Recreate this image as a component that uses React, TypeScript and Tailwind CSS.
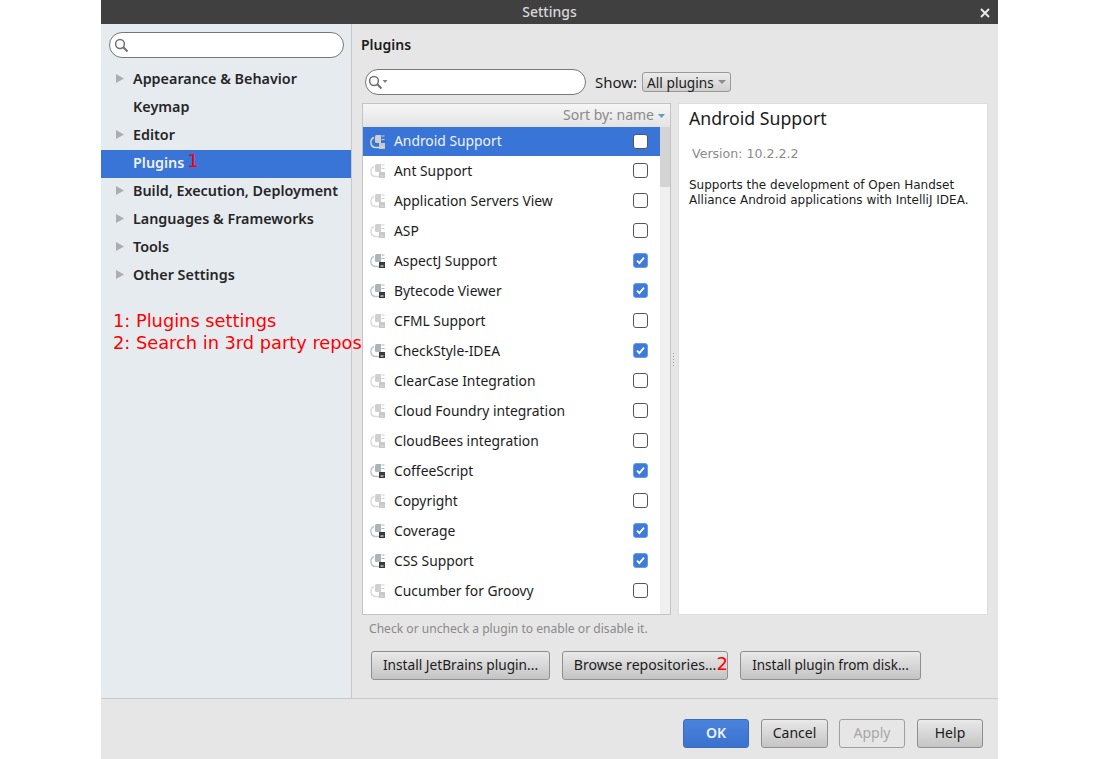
import React from "react";

const plugins: [string, boolean][] = [
  ["Android Support", false],
  ["Ant Support", false],
  ["Application Servers View", false],
  ["ASP", false],
  ["AspectJ Support", true],
  ["Bytecode Viewer", true],
  ["CFML Support", false],
  ["CheckStyle-IDEA", true],
  ["ClearCase Integration", false],
  ["Cloud Foundry integration", false],
  ["CloudBees integration", false],
  ["CoffeeScript", true],
  ["Copyright", false],
  ["Coverage", true],
  ["CSS Support", true],
  ["Cucumber for Groovy", false],
];

const nav: [string, boolean][] = [
  ["Appearance & Behavior", true],
  ["Keymap", false],
  ["Editor", true],
  ["Plugins", false],
  ["Build, Execution, Deployment", true],
  ["Languages & Frameworks", true],
  ["Tools", true],
  ["Other Settings", true],
];

function PluginIcon({ on }: { on: boolean }) {
  const body = on ? "#a9b4bb" : "#d0d0d0";
  const arc = on ? "#bcc6cc" : "#dcdcdc";
  return (
    <svg width="16" height="16" viewBox="0 0 16 16" className="shrink-0">
      <path d="M4 3.500C1.800 4.300 0.900 6 0.900 8.400c0 3 2 5.100 5 5.100H9" fill="none" stroke={arc} strokeWidth="1.400" />
      <path d="M5 2.500Q5 1 6.500 1h4.500v8H6.500Q5 9 5 7.500z" fill={body} />
      <path d="M11.500 2h3M11.500 5.500h3" stroke={body} strokeWidth="1.100" />
      <rect x="9" y="9" width="6" height="6" fill={on ? "#3a3a3a" : "#c8c8c8"} />
      <rect x="10.500" y="12.500" width="3" height="1" fill={on ? "#ffffff" : "#e2e2e2"} />
    </svg>
  );
}

function SearchGlyph({ drop }: { drop?: boolean }) {
  return (
    <svg width="22" height="15" viewBox="0 0 22 15" className="shrink-0">
      <circle cx="6" cy="6" r="4.400" fill="none" stroke="#6f6f6f" strokeWidth="1.500" />
      <path d="M9.300 9.300l4.200 4.200" stroke="#6f6f6f" strokeWidth="2" />
      {drop && <path d="M14.500 5h5l-2.500 3z" fill="#808080" />}
    </svg>
  );
}

function Check({ on }: { on: boolean }) {
  return on ? (
    <span className="w-[15px] h-[15px] rounded-[3px] bg-[#3f7ad9] border border-[#6a9ce4] flex items-center justify-center shrink-0">
      <svg width="11" height="11" viewBox="0 0 11 11">
        <path d="M2 5.600l2.400 2.500L9 2.600" fill="none" stroke="#ffffff" strokeWidth="1.800" />
      </svg>
    </span>
  ) : (
    <span className="block w-[15px] h-[15px] rounded-[3px] bg-white border border-[#555555] shrink-0" />
  );
}

function Btn({ children, w, className = "" }: { children: React.ReactNode; w: string; className?: string }) {
  return (
    <div className={`h-[29px] rounded-[3px] border border-[#8f8f8f] bg-gradient-to-b from-[#e9e9e9] to-[#c4c4c4] flex items-center justify-center text-[14px] text-[#1c1c1c] ${w} ${className}`}>
      {children}
    </div>
  );
}

export default function App() {
  return (
    <div className="w-[1100px] h-[759px] bg-white overflow-hidden pl-[101px] pr-[102px] font-['Noto_Sans',sans-serif]">
      <div className="h-full flex flex-col bg-[#e6e6e6]">
        <div className="h-[24px] shrink-0 bg-[#404040] flex items-center relative">
          <span className="flex-1 text-center text-[14px] font-medium text-[#d8d8d8] -mt-[1px]">Settings</span>
          <svg width="10" height="10" viewBox="0 0 10 10" className="absolute right-[8px] top-[8px]">
            <path d="M1 1l8 8M9 1l-8 8" stroke="#e8e8e8" strokeWidth="2" />
          </svg>
        </div>

        <div className="h-[675px] shrink-0 flex border-b border-[#c9c9c9]">
          <aside className="w-[251px] shrink-0 bg-[#e6ebf0] border-r border-[#c9c9c9] flex flex-col pt-[8px]">
            <div className="ml-[8px] w-[235px] h-[26px] rounded-full border border-[#777777] bg-white flex items-center pl-[4px]">
              <SearchGlyph />
            </div>
            <div className="mt-[8px]">
              {nav.map(([label, arrow]) => {
                const active = label === "Plugins";
                return (
                  <div key={label} className={`h-[28px] flex items-center relative ${active ? "bg-[#3875d7]" : ""}`}>
                    <span className="w-[32px] shrink-0 pl-[15px] -mt-[3px]">
                      {arrow && (
                        <svg width="8" height="9" viewBox="0 0 8 9">
                          <path d="M0 0l8 4.500-8 4.500z" fill="#adadad" />
                        </svg>
                      )}
                    </span>
                    <span className={`text-[14.350px] font-semibold -mt-[2px] ${active ? "text-[#f0f0f0]" : "text-[#262626]"}`}>{label}</span>
                    {active && <span className="ml-[3px] -mt-[7px] text-[18px] leading-none text-[#ff0000] font-['DejaVu_Sans',sans-serif]">1</span>}
                  </div>
                );
              })}
            </div>
            <div className="mt-[20px] pl-[12px] text-[17.800px] leading-[22px] text-[#ff0000] whitespace-nowrap font-['DejaVu_Sans',sans-serif] relative z-10">
              <div>1: Plugins settings</div>
              <div>2: Search in 3rd party repos</div>
            </div>
          </aside>

          <main className="flex-1 min-w-0 pl-[9px] pr-[10px] flex flex-col">
            <div className="h-[21px] mt-[10px] text-[14px] font-semibold text-[#1c1c1c] flex items-center">Plugins</div>
            <div className="mt-[14px] h-[26px] pl-[4px] flex items-center">
              <div className="w-[221px] h-[26px] rounded-full border border-[#777777] bg-white flex items-center pl-[2px]">
                <SearchGlyph drop />
              </div>
              <span className="ml-[9px] text-[15px] text-[#1c1c1c]">Show:</span>
              <div className="ml-[5px] w-[89px] h-[20px] rounded-[3px] border border-[#9a9a9a] bg-gradient-to-b from-[#ececec] to-[#d0d0d0] flex items-center pl-[4px] text-[13.700px] text-[#1c1c1c] whitespace-nowrap">
                <span className="pt-[2px]">All plugins</span>
                <svg width="8" height="4" viewBox="0 0 8 4" className="ml-[4px]"><path d="M0 0h8L4 4z" fill="#8c8c8c" /></svg>
              </div>
            </div>

            <div className="mt-[8px] flex h-[512px]">
              <div className="ml-[1px] w-[309px] h-full border border-[#c4c4c4] bg-white flex flex-col">
                <div className="h-[23px] shrink-0 bg-gradient-to-b from-[#f6f6f6] to-[#e4e4e4] flex items-center justify-end pr-[5px] text-[14px] text-[#8a8a8a]">
                  <span className="-mt-[3px]">Sort by: name</span>
                  <svg width="7" height="4" viewBox="0 0 7 4" className="ml-[4px]"><path d="M0 0h7L3.500 4z" fill="#5a9fc4" /></svg>
                </div>
                <div className="flex-1 flex min-h-0">
                  <div className="flex-1 min-w-0 overflow-hidden">
                    {plugins.map(([name, on], i) => (
                      <div key={name} className={`flex items-center pl-[7px] ${i === 0 ? "bg-[#3875d7] text-[#f2f2f2] h-[29px]" : "h-[30px] text-[#1c1c1c]"}`}>
                        <PluginIcon on={on} />
                        <span className="ml-[8px] flex-1 text-[13.850px] whitespace-nowrap">{name}</span>
                        <span className="mr-[12px] flex -mt-[1px]"><Check on={on} /></span>
                      </div>
                    ))}
                  </div>
                  <div className="w-[10px] shrink-0 bg-[#f0f0f0]">
                    <div className="h-[60px] bg-[#d4d4d4]" />
                  </div>
                </div>
              </div>
              <div className="w-[7px] shrink-0 flex items-center justify-center">
                <div className="w-[3px] h-[14px] -ml-[3px] bg-[radial-gradient(#a0a0a0_1px,transparent_1px)] bg-[length:3px_3px]" />
              </div>
              <div className="w-[310px] h-full bg-white border border-[#dddddd] pl-[10px]">
                <div className="text-[17.700px] leading-[28px] text-[#1c1c1c]">Android Support</div>
                <div className="mt-[13px] pl-[3px] text-[12.600px] leading-[18px] text-[#8a8a8a] font-['DejaVu_Sans',sans-serif]">Version: 10.2.2.2</div>
                <div className="mt-[15px] text-[12px] leading-[15px] text-[#1c1c1c] font-['DejaVu_Sans',sans-serif] whitespace-nowrap">
                  Supports the development of Open Handset
                  <br />
                  Alliance Android applications with IntelliJ IDEA.
                </div>
              </div>
            </div>

            <div className="mt-[5px] pl-[8px] text-[12.100px] leading-[18px] text-[#8a8a8a]">Check or uncheck a plugin to enable or disable it.</div>
            <div className="mt-[13px] pl-[10px] flex gap-[12px]">
              <Btn w="w-[179px]"><span className="text-[13.700px]">Install JetBrains plugin...</span></Btn>
              <Btn w="w-[166px]" className="relative">
                <span className="-mt-[2px] text-[14.100px]">Browse repositories...</span>
                <span className="absolute right-[-1px] top-[1px] text-[18px] leading-[22px] text-[#ff0000] font-['DejaVu_Sans',sans-serif]">2</span>
              </Btn>
              <Btn w="w-[181px]"><span className="text-[13.500px]">Install plugin from disk...</span></Btn>
            </div>
          </main>
        </div>

        <div className="flex-1 flex justify-end items-start pt-[20px] pr-[15px] gap-[12px]">
          <div className="w-[66px] h-[29px] rounded-[3px] border border-[#3a6cb8] bg-gradient-to-b from-[#4a83dc] to-[#3a72cf] flex items-center justify-center text-[14px] font-semibold text-[#eef3fb]"><span className="-mt-[2px]">OK</span></div>
          <Btn w="w-[67px]" className="-mr-[1px]"><span className="-mt-[2px]">Cancel</span></Btn>
          <div className="w-[66px] h-[29px] rounded-[3px] border border-[#a0a0a0] bg-[#e6e6e6] flex items-center justify-center text-[14px] text-[#a8a8a8]"><span className="-mt-[2px]">Apply</span></div>
          <Btn w="w-[66px]"><span className="-mt-[2px]">Help</span></Btn>
        </div>
      </div>
    </div>
  );
}
